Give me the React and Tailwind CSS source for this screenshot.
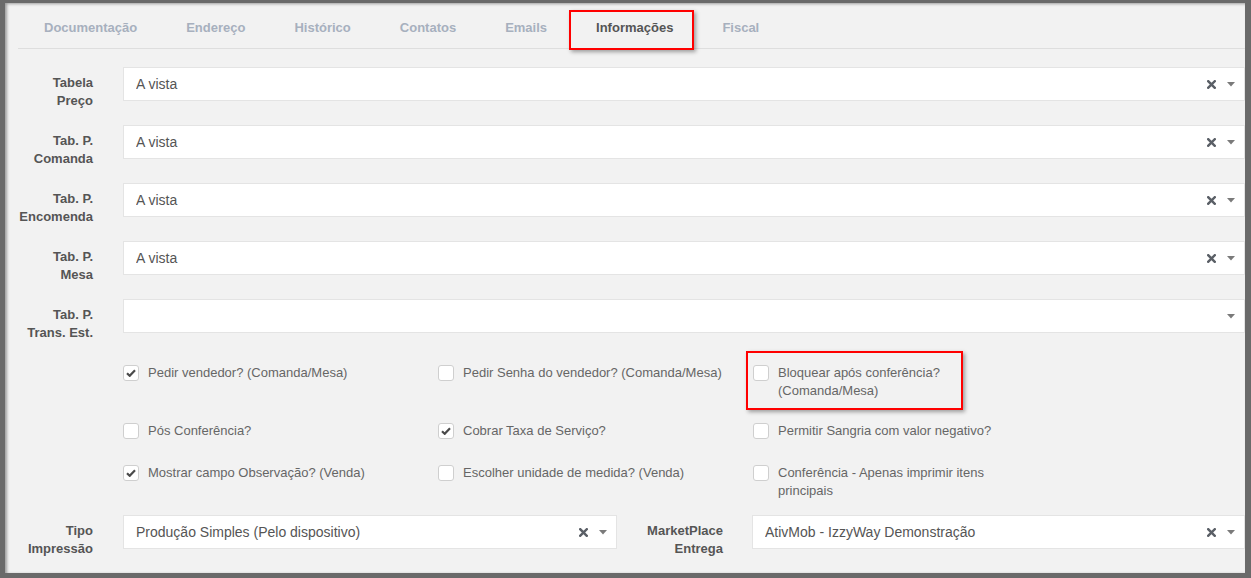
import React from "react";

const tabs = ["Documentação", "Endereço", "Histórico", "Contatos", "Emails", "Informações", "Fiscal"];

const selects = [
  { label: ["Tabela", "Preço"], value: "A vista", clear: true },
  { label: ["Tab. P.", "Comanda"], value: "A vista", clear: true },
  { label: ["Tab. P.", "Encomenda"], value: "A vista", clear: true },
  { label: ["Tab. P.", "Mesa"], value: "A vista", clear: true },
  { label: ["Tab. P.", "Trans. Est."], value: "", clear: false },
];

const checkRows = [
  {
    h: "h-[58px]",
    items: [
      { text: ["Pedir vendedor? (Comanda/Mesa)"], checked: true },
      { text: ["Pedir Senha do vendedor? (Comanda/Mesa)"], checked: false },
      { text: ["Bloquear após conferência?", "(Comanda/Mesa)"], checked: false, marked: true },
    ],
  },
  {
    h: "h-[42px]",
    items: [
      { text: ["Pós Conferência?"], checked: false },
      { text: ["Cobrar Taxa de Serviço?"], checked: true },
      { text: ["Permitir Sangria com valor negativo?"], checked: false },
    ],
  },
  {
    h: "h-[51px]",
    items: [
      { text: ["Mostrar campo Observação? (Venda)"], checked: true },
      { text: ["Escolher unidade de medida? (Venda)"], checked: false },
      { text: ["Conferência - Apenas imprimir itens", "principais"], checked: false },
    ],
  },
];

function Caret() {
  return (
    <svg width="8" height="5" viewBox="0 0 8 5" className="shrink-0">
      <path d="M0 0 L8 0 L4 4.5 Z" fill="#7a7a7a" />
    </svg>
  );
}

function ClearX() {
  return (
    <svg width="9" height="9" viewBox="0 0 9 9" className="shrink-0">
      <path d="M1.2 1.2 L7.8 7.8 M7.8 1.2 L1.2 7.8" stroke="#5a5f66" strokeWidth="2.4" strokeLinecap="square" />
    </svg>
  );
}

function Select({ value, clear, className = "" }) {
  return (
    <div className={`h-[34px] bg-white border border-[#e4e4e4] flex items-center pl-[12px] ${className}`}>
      <span className="flex-1 text-[14px] text-[#555] truncate">{value}</span>
      {clear && (
        <span className="mr-[11px] flex items-center">
          <ClearX />
        </span>
      )}
      <span className="mr-[9px] flex items-center">
        <Caret />
      </span>
    </div>
  );
}

function Label({ lines, className = "" }) {
  return (
    <div className={`text-right font-bold text-[13px] leading-[18px] text-[#555] pt-[7px] ${className}`}>
      {lines.map((l, i) => (
        <div key={i}>{l}</div>
      ))}
    </div>
  );
}

function Check({ checked }) {
  return (
    <span className="mt-[1px] w-[16px] h-[16px] shrink-0 rounded-[3px] border border-[#cfcfcf] bg-white flex items-center justify-center">
      {checked && (
        <svg width="10" height="8" viewBox="0 0 10 8">
          <path d="M1 4.2 L3.7 6.8 L9 1.3" stroke="#4a4a4a" strokeWidth="2.2" fill="none" />
        </svg>
      )}
    </span>
  );
}

export default function App() {
  return (
    <div className="w-[1251px] h-[578px] bg-[#6a6a6a] pt-[3px] pl-[5px] pr-[6px] pb-[5px] font-['Liberation_Sans',Arial,sans-serif]">
      <div className="relative w-full h-full bg-[#f2f2f2] overflow-hidden shadow-[inset_2px_1px_3px_rgba(0,0,0,0.35)]">
        {/* tabs */}
        <div className="ml-[13px] border-b border-[#dedede] flex pl-[1.5px]">
          {tabs.map((t) => {
            const active = t === "Informações";
            return (
              <div
                key={t}
                className={`relative px-[24.5px] pt-[15px] pb-[10px] leading-[20px] text-[13px] font-bold ${
                  active ? "text-[#555]" : "text-[#a7b0be]"
                }`}
              >
                {t}
                {active && (
                  <div className="absolute left-[-3px] top-[7px] w-[125px] h-[40px] border-2 border-[#ff0000] shadow-[2px_2px_4px_rgba(0,0,0,0.35)]" />
                )}
              </div>
            );
          })}
        </div>

        {/* selects */}
        <div className="pt-[18px]">
          {selects.map((s, i) => (
            <div key={i} className="flex items-start h-[58px]">
              <Label lines={s.label} className="w-[88px] shrink-0" />
              <Select value={s.value} clear={s.clear} className="ml-[30px] flex-1" />
            </div>
          ))}
        </div>

        {/* checkboxes */}
        <div className="pt-[7px] pl-[118px]">
          {checkRows.map((row, r) => (
            <div key={r} className={`flex ${row.h}`}>
              {row.items.map((it, c) => (
                <div key={c} className="relative w-[315px] flex items-start gap-[9px]">
                  <Check checked={it.checked} />
                  <div className="text-[13px] leading-[18px] text-[#666]">
                    {it.text.map((l, i) => (
                      <div key={i}>{l}</div>
                    ))}
                  </div>
                  {it.marked && (
                    <div className="absolute left-[-7px] top-[-13px] w-[217px] h-[59px] border-2 border-[#ff0000] shadow-[2px_2px_4px_rgba(0,0,0,0.35)]" />
                  )}
                </div>
              ))}
            </div>
          ))}
        </div>

        {/* bottom selects */}
        <div className="flex items-start">
          <Label lines={["Tipo", "Impressão"]} className="w-[88px] shrink-0" />
          <Select value="Produção Simples (Pelo dispositivo)" clear className="ml-[30px] w-[494px]" />
          <Label lines={["MarketPlace", "Entrega"]} className="w-[106px] shrink-0" />
          <Select value="AtivMob - IzzyWay Demonstração" clear className="ml-[29px] flex-1" />
        </div>
      </div>
    </div>
  );
}
